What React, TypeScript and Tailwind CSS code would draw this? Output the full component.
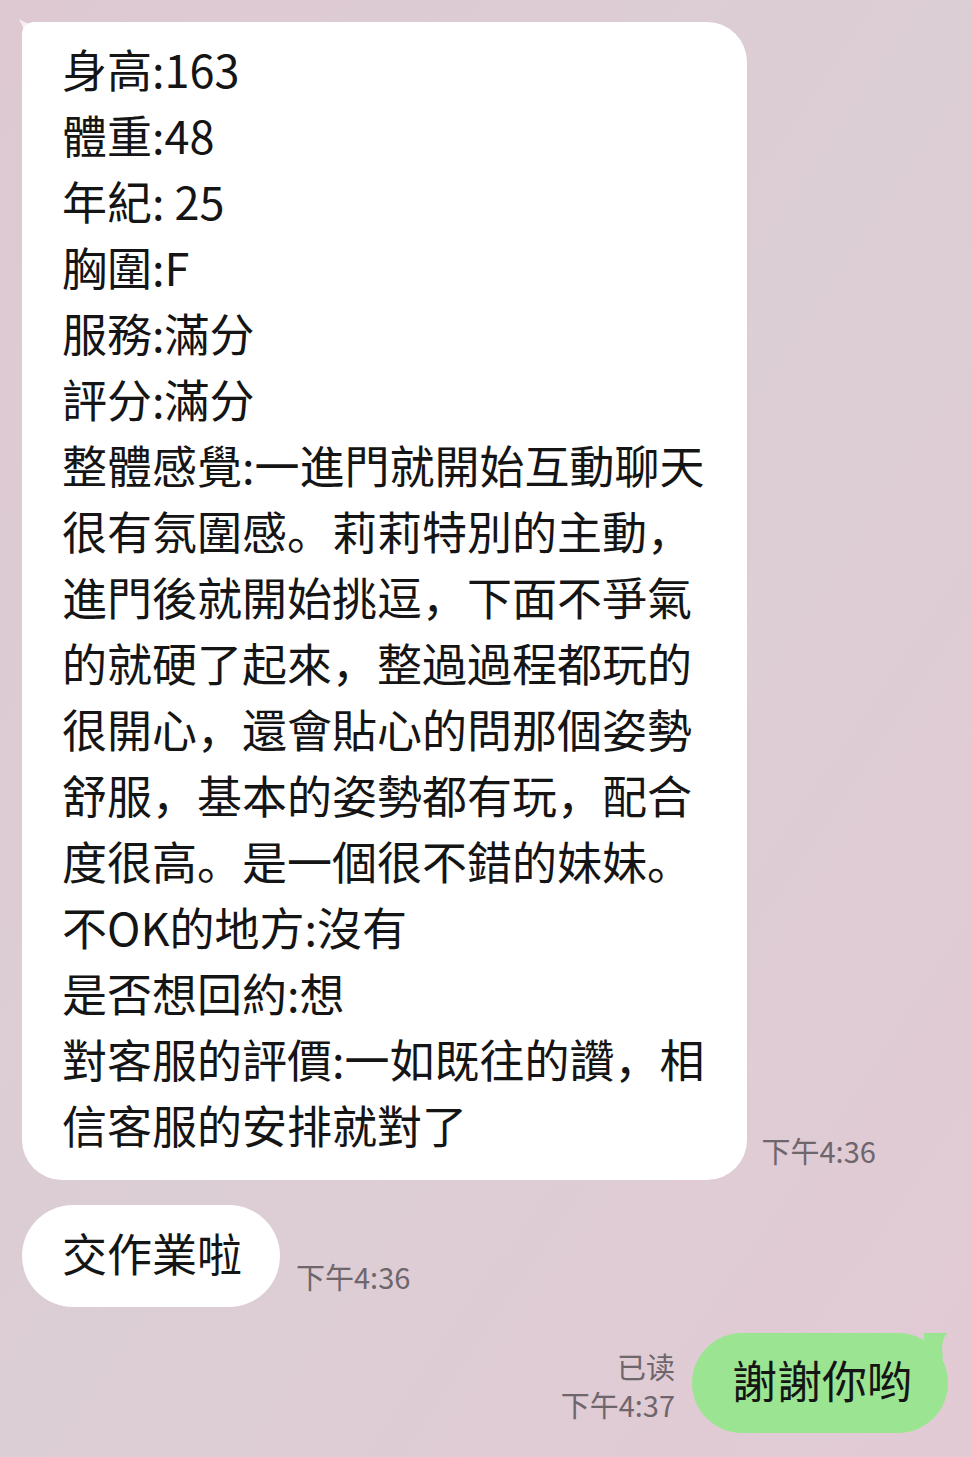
import React from "react";

const reviewLines = [
	"身高:163",
	"體重:48",
	"年紀: 25",
	"胸圍:F",
	"服務:滿分",
	"評分:滿分",
	"整體感覺:一進門就開始互動聊天",
	"很有氛圍感。莉莉特別的主動，",
	"進門後就開始挑逗，下面不爭氣",
	"的就硬了起來，整過過程都玩的",
	"很開心，還會貼心的問那個姿勢",
	"舒服，基本的姿勢都有玩，配合",
	"度很高。是一個很不錯的妹妹。",
	"不OK的地方:沒有",
	"是否想回約:想",
	"對客服的評價:一如既往的讚，相",
	"信客服的安排就對了",
];

const Time = ({ text }: { text: string }) => (
	<div className="text-[29px] leading-[38px] text-[#6f666c] whitespace-nowrap">{text}</div>
);

export default function App() {
	return (
		<div className="w-full h-[1457px] overflow-hidden bg-gradient-to-br from-[#dec9d2] via-[#dcced5] to-[#e2cad4] font-['Noto_Sans_CJK_SC','Noto_Sans_CJK_TC',sans-serif] text-[#151515]">
			<div className="flex flex-col pt-[22px] px-[22px]">
				{/* received: long review */}
				<div className="flex items-end">
					<div className="relative bg-white rounded-[40px] rounded-tl-[12px] pl-[40px] pr-[42px] pt-[14px] pb-[22px]">
						<svg className="absolute -left-[5px] -top-[5px]" width="28" height="28" viewBox="0 0 28 28">
							<path d="M2 2 Q14 10 28 8 L28 28 L8 28 Q10 16 2 2 Z" fill="#ffffff" fillOpacity="0.7" />
						</svg>
						{reviewLines.map((line, i) => (
							<div key={i} className="text-[45px] leading-[66px] whitespace-nowrap">{line}</div>
						))}
					</div>
					<div className="ml-[15px] mb-[11px]">
						<Time text="下午4:36" />
					</div>
				</div>

				{/* received: short */}
				<div className="flex items-end mt-[25px]">
					<div className="bg-white rounded-full pl-[40px] pr-[38px] pt-[15px] pb-[21px]">
						<div className="text-[45px] leading-[66px] whitespace-nowrap">交作業啦</div>
					</div>
					<div className="ml-[16px] mb-[12px]">
						<Time text="下午4:36" />
					</div>
				</div>

				{/* sent */}
				<div className="flex items-end justify-end mt-[26px] mr-[2px]">
					<div className="flex flex-col items-end mr-[17px] mb-[10px]">
						<Time text="已读" />
						<Time text="下午4:37" />
					</div>
					<div className="relative bg-[#9be592] rounded-full pl-[40px] pr-[36px] pt-[14px] pb-[20px]">
						<svg className="absolute right-0 top-0" width="24" height="26" viewBox="0 0 24 26">
							<path d="M0 0 L23 0 Q16 8 19 26 L0 26 Z" fill="#9be592" />
						</svg>
						<div className="relative text-[45px] leading-[66px] whitespace-nowrap">謝謝你哟</div>
					</div>
				</div>
			</div>
		</div>
	);
}
